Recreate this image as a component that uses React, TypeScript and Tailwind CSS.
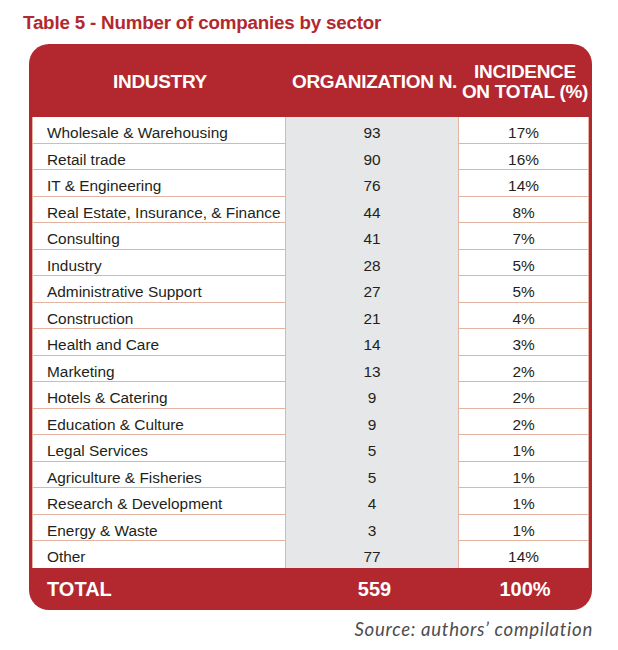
import React from "react";

const rows: [string, string, string][] = [
  ["Wholesale & Warehousing", "93", "17%"],
  ["Retail trade", "90", "16%"],
  ["IT & Engineering", "76", "14%"],
  ["Real Estate, Insurance, & Finance", "44", "8%"],
  ["Consulting", "41", "7%"],
  ["Industry", "28", "5%"],
  ["Administrative Support", "27", "5%"],
  ["Construction", "21", "4%"],
  ["Health and Care", "14", "3%"],
  ["Marketing", "13", "2%"],
  ["Hotels & Catering", "9", "2%"],
  ["Education & Culture", "9", "2%"],
  ["Legal Services", "5", "1%"],
  ["Agriculture & Fisheries", "5", "1%"],
  ["Research & Development", "4", "1%"],
  ["Energy & Waste", "3", "1%"],
  ["Other", "77", "14%"],
];

export default function App() {
  return (
    <div
      className="w-[618px] h-[650px] bg-white relative"
      style={{ fontFamily: '"Liberation Sans", Arial, sans-serif' }}
    >
      <div className="pl-[23px] pt-[12px] h-[44px] text-[18.8px] font-bold text-[#b3282e] leading-[22px] tracking-[-0.2px]">
        Table 5 - Number of companies by sector
      </div>
      <div className="ml-[29px] w-[563px] bg-[#b3282e] rounded-[20px] overflow-hidden">
        <div className="grid grid-cols-[256px_173px_1fr] h-[73px] text-white font-bold text-[19px] leading-[20px] px-[3px] tracking-[-0.3px]">
          <div className="flex items-center justify-center pt-[3px]">INDUSTRY</div>
          <div className="flex items-center justify-center pt-[3px]">ORGANIZATION N.</div>
          <div className="flex flex-col items-center justify-center text-center pt-[2px]">
            <span>INCIDENCE</span>
            <span>ON TOTAL (%)</span>
          </div>
        </div>
        <div className="mx-[3px] bg-white border-x border-[#e4b4a3]">
          {rows.map(([name, n, pct], i) => (
            <div
              key={name}
              className={
                "grid grid-cols-[253px_173px_1fr] h-[26.5px] text-[15.4px] text-[#231f20] " +
                (i < rows.length - 1 ? "border-b border-[#e4b4a3]" : "")
              }
            >
              <div className="border-r border-[#e4b4a3] pl-[14px] pt-[4px] flex items-center">{name}</div>
              <div className="border-r border-[#e4b4a3] bg-[#e6e7e8] pt-[4px] flex items-center justify-center">{n}</div>
              <div className="pt-[4px] flex items-center justify-center">{pct}</div>
            </div>
          ))}
        </div>
        <div className="grid grid-cols-[256px_173px_1fr] h-[42.5px] px-[3px] text-white font-bold text-[20px]">
          <div className="flex items-center pl-[15px]">TOTAL</div>
          <div className="flex items-center justify-center">559</div>
          <div className="flex items-center justify-center">100%</div>
        </div>
      </div>
      <div
        className="text-right pr-[25px] pt-[6px] text-[18.6px] italic text-[#4d4d4f] tracking-[0.7px]"
        style={{ fontFamily: 'Lato, "Open Sans", sans-serif' }}
      >
        Source: authors’ compilation
      </div>
    </div>
  );
}
